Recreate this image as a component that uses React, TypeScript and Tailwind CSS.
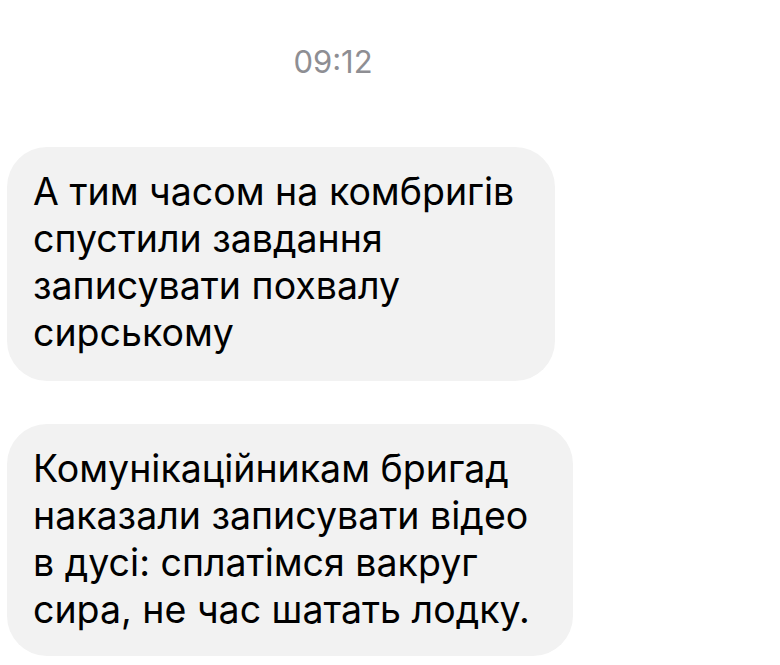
export default function App() {
  const first = ["А тим часом на комбригів", "спустили завдання", "записувати похвалу", "сирському"];
  const second = [
    "Комунікаційникам бригад",
    "наказали записувати відео",
    "в дусі: сплатімся вакруг",
    "сира, не час шатать лодку.",
  ];
  return (
    <div className="w-[780px] h-[665px] bg-white overflow-hidden font-['Inter','Liberation_Sans',Arial,sans-serif]">
      <div className="w-[666px] flex justify-center pt-[44px]">
        <span className="text-[31px] leading-[36px] text-[#8e8e93]">09:12</span>
      </div>
      <div className="pl-[7px] pt-[67px] flex flex-col gap-[43px]">
        <div className="w-[548px] h-[234px] rounded-[40px] bg-[#f2f2f2] pl-[26px] pt-[21px]">
          {first.map((l) => (
            <div key={l} className="text-[37.5px] leading-[47px] text-black whitespace-nowrap">{l}</div>
          ))}
        </div>
        <div className="w-[566px] h-[232px] rounded-[40px] bg-[#f2f2f2] pl-[26px] pt-[21px]">
          {second.map((l) => (
            <div key={l} className="text-[37.5px] leading-[47px] text-black whitespace-nowrap">{l}</div>
          ))}
        </div>
      </div>
    </div>
  );
}
